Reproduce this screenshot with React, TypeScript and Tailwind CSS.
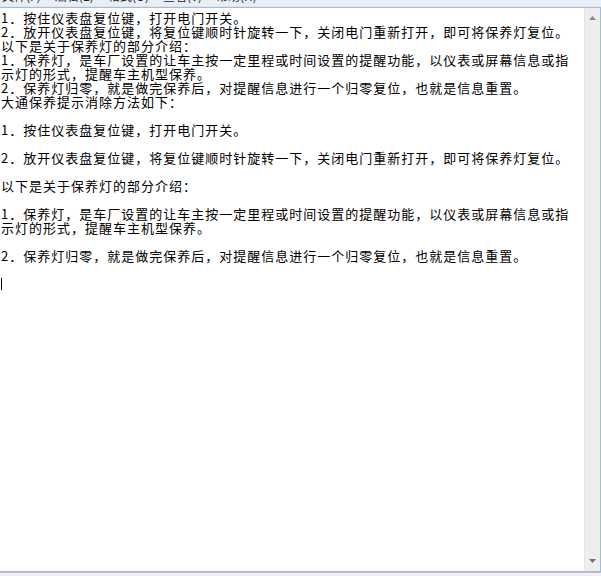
import React from 'react';

const lines: string[] = [
    '1．按住仪表盘复位键，打开电门开关。',
    '2．放开仪表盘复位键，将复位键顺时针旋转一下，关闭电门重新打开，即可将保养灯复位。',
    '以下是关于保养灯的部分介绍：',
    '1．保养灯，是车厂设置的让车主按一定里程或时间设置的提醒功能，以仪表或屏幕信息或指示灯的形式，提醒车主机型保养。',
    '2．保养灯归零，就是做完保养后，对提醒信息进行一个归零复位，也就是信息重置。',
    '大通保养提示消除方法如下：',
    '',
    '1．按住仪表盘复位键，打开电门开关。',
    '',
    '2．放开仪表盘复位键，将复位键顺时针旋转一下，关闭电门重新打开，即可将保养灯复位。',
    '',
    '以下是关于保养灯的部分介绍：',
    '',
    '1．保养灯，是车厂设置的让车主按一定里程或时间设置的提醒功能，以仪表或屏幕信息或指示灯的形式，提醒车主机型保养。',
    '',
    '2．保养灯归零，就是做完保养后，对提醒信息进行一个归零复位，也就是信息重置。',
    '',
];

const menus = ['文件(F)', '编辑(E)', '格式(O)', '查看(V)', '帮助(H)'];

const App: React.FC = () => {
    return (
        <div className="w-[601px] h-[576px] flex flex-col overflow-hidden bg-[#f4eeee] font-['Noto_Sans_CJK_SC',sans-serif]">
            {/* menu bar, mostly scrolled off the top */}
            <div className="h-[6px] overflow-hidden bg-[#e9eef6]">
                <div className="flex -mt-[12px] pl-[2px] gap-[14px] text-[12px] leading-[16px] text-[#222]">
                    {menus.map((m) => (
                        <span key={m}>{m}</span>
                    ))}
                </div>
            </div>
            <div className="h-px bg-[#dde5ef]" />

            <div className="flex-1 flex border-t border-r border-b border-[#9fbcd8] min-h-0">
                <div className="flex-1 bg-white pl-[1px] pr-[6px] pt-[3px] text-[13px] tracking-[1px] leading-[14px] text-black overflow-hidden">
                    {lines.map((l, i) => (
                        <div key={i} className="whitespace-pre-wrap break-all min-h-[14px]">
                            {l}
                        </div>
                    ))}
                    <div className="h-[14px] flex items-center">
                        <div className="w-px h-[12px] bg-black" />
                    </div>
                </div>

                <div className="w-[16px] bg-[#eeeeee] border-l border-[#e4e4e4] flex flex-col justify-between items-center py-[8px]">
                    <svg width="7" height="4" viewBox="0 0 7 4">
                        <path d="M3.5 0 L7 4 L0 4 Z" fill="#8a8a8a" />
                    </svg>
                    <svg width="7" height="4" viewBox="0 0 7 4">
                        <path d="M0 0 L7 0 L3.5 4 Z" fill="#707070" />
                    </svg>
                </div>
            </div>
            <div className="h-px bg-[#b7c3cf]" />
            <div className="h-[3px] bg-[#f4eeee]" />
        </div>
    );
};

export default App;
